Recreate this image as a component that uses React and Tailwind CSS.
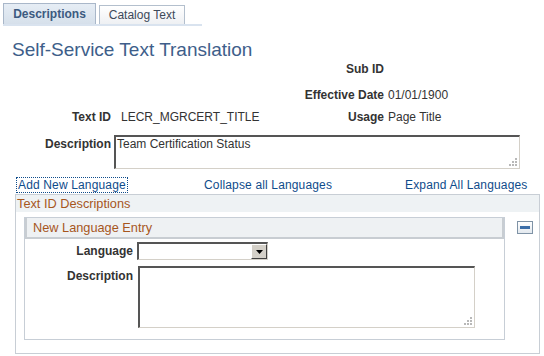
import React from 'react';

const FONT = { fontFamily: '"Liberation Sans", Arial, sans-serif' };

function GripDots() {
  return (
    <svg className="absolute right-[2px] bottom-[2px]" width="9" height="9" viewBox="0 0 9 9">
      <rect x="7" y="1" width="2" height="2" fill="#b8b8b8" />
      <rect x="4" y="4" width="2" height="2" fill="#b8b8b8" />
      <rect x="7" y="4" width="2" height="2" fill="#b8b8b8" />
      <rect x="1" y="7" width="2" height="2" fill="#b8b8b8" />
      <rect x="4" y="7" width="2" height="2" fill="#b8b8b8" />
      <rect x="7" y="7" width="2" height="2" fill="#b8b8b8" />
    </svg>
  );
}

function TextBox({ className, value }) {
  return (
    <div
      className={`relative border-t-2 border-l-2 border-r border-b border-t-[#555] border-l-[#555] border-r-[#d4d0c8] border-b-[#d4d0c8] bg-white ${className}`}
    >
      <div className="pl-[1px] leading-[14px] text-[12px] text-[#333]">{value}</div>
      <GripDots />
    </div>
  );
}

function Dropdown() {
  return (
    <div className="flex h-[18px] w-[131px] border-t-2 border-l-2 border-r border-b border-t-[#555] border-l-[#555] border-r-[#d4d0c8] border-b-[#d4d0c8] bg-white">
      <div className="flex-1" />
      <div className="flex w-[16px] items-center justify-center border-t border-l border-r border-b border-t-white border-l-white border-r-[#404040] border-b-[#404040] bg-[#d4d0c8]">
        <svg width="7" height="4" viewBox="0 0 7 4">
          <path d="M0 0H7L3.5 4Z" fill="#000" />
        </svg>
      </div>
    </div>
  );
}

export default function App() {
  return (
    <div className="h-[356px] w-[544px] overflow-hidden bg-white text-[12px] text-[#333]" style={FONT}>
      {/* tabs */}
      <div className="flex items-end pl-[3px] pt-[3px]">
        <div className="flex h-[21px] w-[93px] items-center justify-center border border-b-0 border-[#a9b7c9] bg-gradient-to-b from-[#e6edf5] to-[#d6e0eb] text-[12px] font-bold text-[#3c5a80]">
          Descriptions
        </div>
        <div className="ml-[3px] flex h-[19px] w-[86px] items-center justify-center border border-b-0 border-[#b3bfcd] bg-gradient-to-b from-white to-[#eef0f3] text-[12px] text-[#3d4a5a]">
          Catalog Text
        </div>
      </div>
      <div className="ml-[3px] h-[2px] w-[199px] bg-[#d9e3ef]" />

      {/* title */}
      <h1 className="mt-[13px] pl-[12px] text-[19px] leading-[22px] text-[#3e5e8a]">
        Self-Service Text Translation
      </h1>

      {/* fields */}
      <div className="flex h-[27px] items-start pt-[1px] leading-[14px]">
        <div className="w-[384px] text-right font-bold">Sub ID</div>
      </div>
      <div className="flex h-[22px] items-start leading-[14px]">
        <div className="w-[384px] text-right font-bold">Effective Date</div>
        <div className="ml-[4px]">01/01/1900</div>
      </div>
      <div className="flex h-[25px] items-start leading-[14px]">
        <div className="w-[111px] text-right font-bold">Text ID</div>
        <div className="ml-[10px] w-[153px]">LECR_MGRCERT_TITLE</div>
        <div className="w-[110px] text-right font-bold">Usage</div>
        <div className="ml-[4px]">Page Title</div>
      </div>
      <div className="flex items-start leading-[14px]">
        <div className="w-[111px] pt-[2px] text-right font-bold">Description</div>
        <TextBox className="ml-[3px] h-[34px] w-[406px]" value="Team Certification Status" />
      </div>

      {/* links */}
      <div className="relative mt-[8px] h-[16px] leading-[14px] tracking-[0.15px] text-[#0f4c8b]">
        <span className="absolute left-[16px] top-0 border border-dotted border-[#0f4c8b] px-[1px]">Add New Language</span>
        <span className="absolute left-[204px] top-[1px]">Collapse all Languages</span>
        <span className="absolute left-[405px] top-[1px]">Expand All Languages</span>
      </div>

      {/* group box */}
      <div className="ml-[15px] mt-[1px] h-[160px] w-[525px] border border-[#c8ced5]">
        <div className="h-[17px] bg-[#eef2f4] pl-[1px] text-[12.75px] leading-[17px] text-[#a6561d]">Text ID Descriptions</div>
        <div className="flex pl-[8px] pt-[5px]">
          <div className="w-[481px] border border-[#c7ced6]">
            <div className="h-[21px] border-l-2 border-b-2 border-r-2 border-[#c8cdd2] bg-[#eef1f3] pl-[6px] text-[12.75px] leading-[19px] text-[#a6561d]">
              New Language Entry
            </div>
            <div className="flex items-center pt-[3px]">
              <div className="w-[108px] text-right font-bold leading-[14px]">Language</div>
              <div className="ml-[4px]">
                <Dropdown />
              </div>
            </div>
            <div className="mt-[6px] flex items-start pb-[11px]">
              <div className="w-[108px] pt-[3px] text-right font-bold leading-[14px]">Description</div>
              <TextBox className="ml-[5px] h-[62px] w-[337px]" value="" />
            </div>
          </div>
          <button className="ml-[12px] mt-[4px] flex h-[13px] w-[16px] items-center justify-center border border-[#7f93a6] bg-gradient-to-b from-white to-[#e3e9ef]">
            <span className="block h-[3px] w-[10px] bg-[#3b6ea8]" />
          </button>
        </div>
      </div>
    </div>
  );
}
